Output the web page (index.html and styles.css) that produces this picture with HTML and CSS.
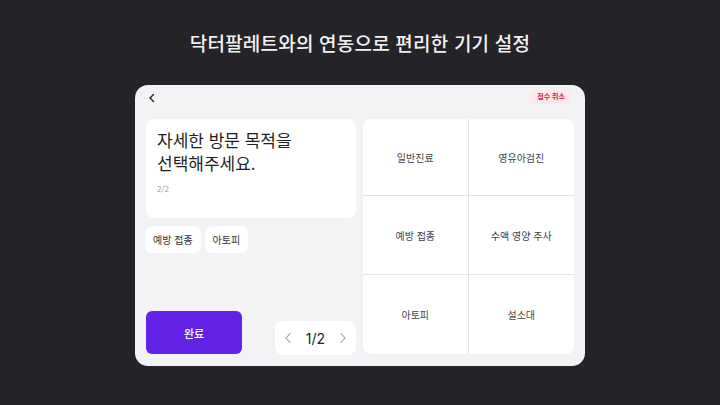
FILE: index.html
```html
<!DOCTYPE html>
<html lang="ko">
<head>
<meta charset="utf-8">
<link rel="stylesheet" href="styles.css">
</head>
<body>
<h1 class="title">닥터팔레트와의 연동으로 편리한 기기 설정</h1>
<div class="tablet">
  <div class="header">
    <svg class="back" width="8" height="10" viewBox="0 0 8 10"><path d="M5.5 1.5 L2 5 L5.5 8.5" fill="none" stroke="#222" stroke-width="1.4" stroke-linecap="round" stroke-linejoin="round"/></svg>
    <span class="cancel">접수 취소</span>
  </div>
  <div class="content">
    <div class="left">
      <div class="question">
        <p class="q-text">자세한 방문 목적을<br>선택해주세요.</p>
        <p class="q-step">2/2</p>
      </div>
      <div class="chips">
        <span class="chip">예방 접종</span>
        <span class="chip">아토피</span>
      </div>
      <div class="bottom">
        <button class="done">완료</button>
        <div class="pager">
          <svg width="8" height="12" viewBox="0 0 8 12"><path d="M6 1.5 L2 6 L6 10.5" fill="none" stroke="#999" stroke-width="1.1" stroke-linecap="round" stroke-linejoin="round"/></svg>
          <span class="page">1/2</span>
          <svg width="8" height="12" viewBox="0 0 8 12"><path d="M2 1.5 L6 6 L2 10.5" fill="none" stroke="#999" stroke-width="1.1" stroke-linecap="round" stroke-linejoin="round"/></svg>
        </div>
      </div>
    </div>
    <div class="grid">
      <div class="cell">일반진료</div>
      <div class="cell">영유아검진</div>
      <div class="cell">예방 접종</div>
      <div class="cell">수액 영양 주사</div>
      <div class="cell">아토피</div>
      <div class="cell">설소대</div>
    </div>
  </div>
</div>
</body>
</html>
```
FILE: styles.css
```css
* { box-sizing: border-box; }
html, body {
  margin: 0;
  padding: 0;
  background: #242428;
  width: 720px;
  height: 405px;
  overflow: hidden;
  font-family: "Noto Sans CJK KR", "Noto Sans", sans-serif;
}
.title {
  margin: 0;
  padding-top: 29px;
  height: 85px;
  text-align: center;
  color: #f2f2f2;
  font-size: 19px;
  font-weight: 500;
  line-height: 28px;
  letter-spacing: 0.2px;
}
.tablet {
  width: 450px;
  height: 281px;
  margin: 0 auto;
  background: #f2f3f5;
  border-radius: 13px;
  padding: 3px 11px 12px 11px;
  display: flex;
  flex-direction: column;
}
.header {
  height: 31px;
  display: flex;
  justify-content: space-between;
  align-items: flex-start;
  padding-left: 1px;
}
.back { margin-top: 5px; margin-left: 1px; }
.cancel {
  background: #fde8ee;
  color: #d0224f;
  font-size: 7px;
  font-weight: 700;
  padding: 0 6px;
  height: 15px;
  line-height: 15px;
  border-radius: 5px;
  margin-top: 1px;
  margin-right: 3px;
}
.content {
  flex: 1;
  display: flex;
  gap: 7px;
}
.left {
  width: 210px;
  display: flex;
  flex-direction: column;
}
.question {
  background: #fff;
  border-radius: 8px;
  height: 99px;
  padding: 9px 11px;
}
.q-text {
  margin: 0;
  font-size: 17px;
  line-height: 23px;
  color: #1f1f1f;
  font-weight: 400;
}
.q-step {
  margin: 9px 0 0;
  font-size: 8px;
  color: #9a9a9a;
}
.chips {
  margin-top: 8px;
  margin-left: -1px;
  display: flex;
  gap: 4px;
}
.chip {
  background: #fff;
  border-radius: 7px;
  height: 27px;
  line-height: 27px;
  padding: 0 8px;
  font-size: 10px;
  color: #333;
}
.bottom {
  margin-top: auto;
  display: flex;
  justify-content: space-between;
  align-items: flex-end;
}
.done {
  width: 96px;
  height: 43px;
  border: 0;
  border-radius: 6px;
  background: #6323e6;
  color: #fff;
  font-family: inherit;
  font-size: 11px;
  font-weight: 500;
  padding: 0;
}
.pager {
  width: 81px;
  height: 34px;
  background: #fff;
  border-radius: 8px;
  display: flex;
  align-items: center;
  justify-content: space-between;
  padding: 0 9px;
  margin-bottom: -1px;
}
.page {
  font-family: "Inter", "Noto Sans", sans-serif;
  font-size: 14px;
  color: #222;
}
.grid {
  width: 211px;
  background: #fff;
  border-radius: 8px;
  display: grid;
  grid-template-columns: 1fr 1fr;
  grid-template-rows: 77px 79px 1fr;
  overflow: hidden;
}
.cell {
  display: flex;
  align-items: center;
  justify-content: center;
  font-size: 10px;
  color: #444;
  border-color: #e3e4e6;
  border-style: solid;
  border-width: 0;
}
.cell:nth-child(odd) { border-right-width: 1px; }
.cell:nth-child(-n+4) { border-bottom-width: 1px; }
```
